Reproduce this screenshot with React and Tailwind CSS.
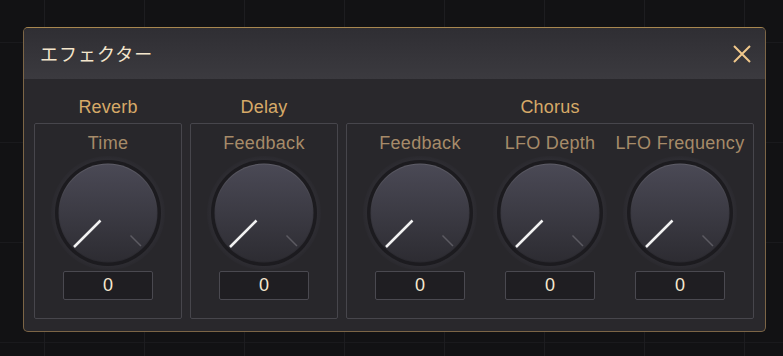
import React from 'react';

const Knob = () => {
  const c = 58;
  return (
    <svg width="116" height="116" viewBox="0 0 116 116" className="block">
      <defs>
        <linearGradient id="face" x1="0" y1="0" x2="0" y2="1">
          <stop offset="0" stopColor="#4a4955" />
          <stop offset="1" stopColor="#2d2c32" />
        </linearGradient>
        <linearGradient id="rim" x1="0" y1="0" x2="0" y2="1">
          <stop offset="0" stopColor="#5d5c66" />
          <stop offset="0.5" stopColor="#38373f" />
          <stop offset="1" stopColor="#2a292f" />
        </linearGradient>
        <radialGradient id="glow" cx="0.5" cy="0.5" r="0.5">
          <stop offset="0.85" stopColor="#323137" />
          <stop offset="1" stopColor="#2a292e" />
        </radialGradient>
      </defs>
      <circle cx={c} cy={c} r="57" fill="url(#glow)" />
      <circle cx={c} cy={c} r="53" fill="#1c1b1f" />
      <circle cx={c} cy={c} r="49.5" fill="url(#rim)" />
      <circle cx={c} cy={c} r="48.5" fill="url(#face)" />
      <line x1={c - 7.5} y1={c + 7.5} x2={c - 34} y2={c + 34} stroke="#f2f2f2" strokeWidth="2.5" strokeLinecap="butt" />
      <line x1={c + 22.5} y1={c + 22.5} x2={c + 33} y2={c + 33} stroke="#5c5b62" strokeWidth="1.5" />
    </svg>
  );
};

const Control = ({ label }) => (
  <div className="w-[130px] flex flex-col items-center">
    <div className="h-5 leading-5 text-[18px] tracking-[0.3px] text-[#a68b69]">{label}</div>
    <div className="mt-[2px]">
      <Knob />
    </div>
    <div className="w-[90px] h-[29px] bg-[#1f1e22] border border-[#4a4950] rounded-[2px] flex items-center justify-center text-[18px] text-[#f6e8cf]">
      0
    </div>
  </div>
);

const Group = ({ title, controls }) => (
  <div className="flex flex-col items-center">
    <div className="h-5 leading-5 text-[18px] tracking-[0.2px] text-[#d7aa68]">{title}</div>
    <div className="mt-[6px] flex border border-[#47464c] rounded-[2px] bg-[#28272b] px-2 pt-[9px] pb-[18px]">
      {controls.map((c) => (
        <Control key={c} label={c} />
      ))}
    </div>
  </div>
);

export default function App() {
  return (
    <div
      className="min-h-screen w-full bg-[#121214] pt-[27px] pl-[23px] bg-[linear-gradient(to_right,#1d1d20_1px,transparent_1px),linear-gradient(to_bottom,#1a1a1d_1px,transparent_1px)] bg-[size:100px_100px] bg-[position:44px_42px]"
      style={{ fontFamily: '"Liberation Sans", Arial, sans-serif' }}
    >
      <div className="w-[743px] rounded-[5px] border border-[#7c6546] border-t-[#a8874f] bg-[#29282c] overflow-hidden">
        <div className="h-[51px] flex items-center justify-between pl-4 pr-[14px] bg-[linear-gradient(to_bottom,#2f2e33,#3b3a3f)]">
          <div
            className="text-[18px] tracking-[1px] text-[#f4e6cc]"
            style={{ fontFamily: '"Noto Sans CJK JP", "Noto Sans", sans-serif' }}
          >
            エフェクター
          </div>
          <svg width="18" height="18" viewBox="0 0 18 18">
            <path d="M1 1 L17 17 M17 1 L1 17" stroke="#f0c88b" strokeWidth="2" />
          </svg>
        </div>
        <div className="flex gap-2 pl-[10px] pr-[11px] pt-[18px] pb-[12px]">
          <Group title="Reverb" controls={['Time']} />
          <Group title="Delay" controls={['Feedback']} />
          <Group title="Chorus" controls={['Feedback', 'LFO Depth', 'LFO Frequency']} />
        </div>
      </div>
    </div>
  );
}
